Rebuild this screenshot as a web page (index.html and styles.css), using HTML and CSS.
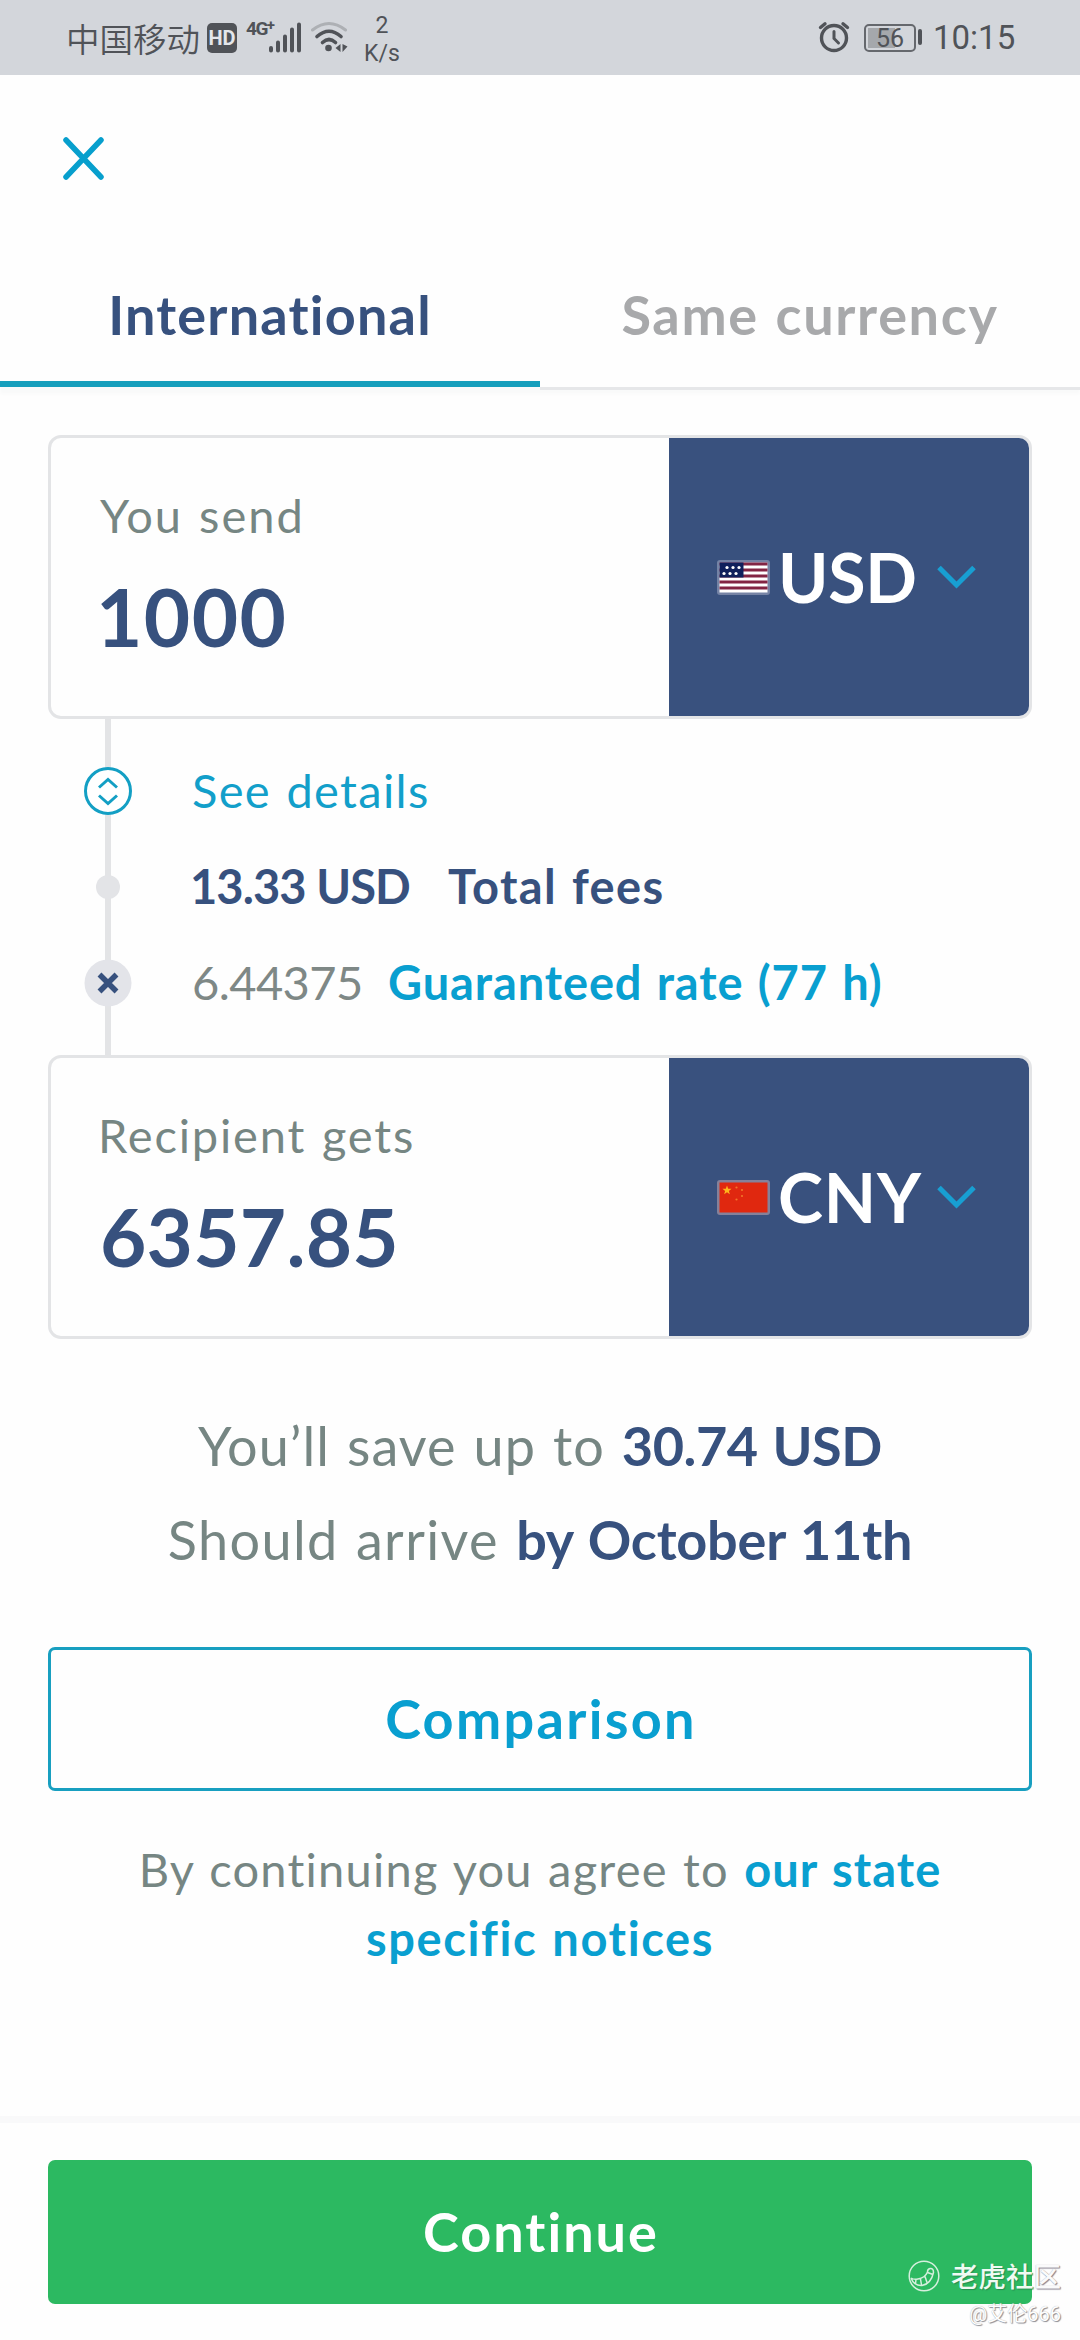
FILE: index.html
```
<!DOCTYPE html>
<html lang="en">
<head>
<meta charset="utf-8">
<title>Send money</title>
<link rel="stylesheet" href="styles.css">
</head>
<body>
<header class="status">
  <span class="carrier">中国移动</span>
  <span class="hd">HD</span>
  <span class="net">4G<sup>+</sup></span>
  <svg class="signal" width="34" height="32" viewBox="0 0 34 32"><path d="M3 27v2.500M10 21.500v8M17 15.500v14M24 8.500v21M31 3.500v26" stroke="#505358" stroke-width="4" stroke-linecap="round"/></svg>
  <svg class="wifi" width="38" height="34" viewBox="0 0 38 34" fill="none" stroke-linecap="round"><path d="M2.500 10Q19-3 35.500 10" stroke="#adb0b4" stroke-width="3"/><path d="M7 16.500Q19 6 31 16.500M12.500 22.500Q19 16.500 25.500 22.500" stroke="#505358" stroke-width="3.600"/><circle cx="18.500" cy="28" r="3.300" fill="#505358"/><path d="M30.500 24v8l-5-4zM32.500 24v8l5-5.500z" fill="#505358"/></svg>
  <span class="speed"><span>2</span><span>K/s</span></span>
  <span class="spacer"></span>
  <svg class="alarm" width="32" height="32" viewBox="0 0 32 32" fill="none" stroke="#505358" stroke-linecap="round"><circle cx="16" cy="17" r="12.500" stroke-width="3.400"/><path d="M16 10.500V17.500L20.500 22" stroke-width="3"/><path d="M2.500 6.500L7 2.800M29.500 6.500L25 2.800" stroke-width="3.400"/></svg>
  <span class="battery">56</span>
  <span class="battery-tip"></span>
  <span class="clock">10:15</span>
</header>

<div class="topbar">
  <svg width="42" height="43" viewBox="0 0 42 43"><path d="M3 3L38 40M38 3L3 40" stroke="#079fcd" stroke-width="5.500" stroke-linecap="round"/></svg>
</div>

<nav class="tabs">
  <div class="tab tab-active"><span class="tab-intl">International</span></div>
  <div class="tab"><span class="tab-same">Same currency</span></div>
</nav>

<main>
  <section class="card">
    <div class="entry">
      <div class="label">You send</div>
      <div class="amount amount-send">1000</div>
    </div>
    <div class="currency">
      <svg class="flag" width="53" height="35" viewBox="0 0 53 35"><rect width="53" height="35" rx="3" fill="#7583a5"/><path fill="#fff" d="M2.500 2.500h48v30h-48z"/><path d="M2.500 4h48M2.500 10h48M2.500 16h48M2.500 22h48M2.500 28h48" stroke="#832544" stroke-width="3"/><path fill="#10205c" d="M2.500 2.500h24v15h-24z"/><g fill="#fff"><circle cx="10" cy="7.500" r="1.600"/><circle cx="16" cy="7.500" r="1.600"/><circle cx="22" cy="7.500" r="1.600"/><circle cx="7" cy="13.500" r="1.600"/><circle cx="13" cy="13.500" r="1.600"/><circle cx="19" cy="13.500" r="1.600"/></g></svg>
      <span class="code code-usd">USD</span>
      <svg class="chevron" width="39" height="24" viewBox="0 0 39 24"><path d="M2 2.500L19.500 20L37 2.500" fill="none" stroke="#189fd2" stroke-width="5"/></svg>
    </div>
  </section>

  <section class="details">
    <div class="step">
      <svg class="node" width="48" height="48" viewBox="0 0 48 48" fill="none" stroke="#139fc4"><circle cx="24" cy="24" r="22.500" fill="#fff" stroke-width="3"/><path d="M15 20.500L24 12.500L33 20.500M15 28.500L24 36.500L33 28.500" stroke-width="3"/></svg>
      <span class="details-link">See details</span>
    </div>
    <div class="step">
      <svg class="node" width="48" height="48" viewBox="0 0 48 48"><circle cx="24" cy="24" r="12" fill="#e3e4e7"/></svg>
      <span class="fee">13.33 USD</span><span class="fee-label">Total fees</span>
    </div>
    <div class="step">
      <svg class="node" width="48" height="48" viewBox="0 0 48 48"><circle cx="24" cy="24" r="23.500" fill="#e3e4e9"/><path d="M15.500 15.500L32.500 32.500M32.500 15.500L15.500 32.500" stroke="#37517e" stroke-width="5.500"/></svg>
      <span class="rate">6.44375</span><span class="rate-label">Guaranteed rate (77 h)</span>
    </div>
  </section>

  <section class="card">
    <div class="entry">
      <div class="label label-get">Recipient gets</div>
      <div class="amount amount-get">6357.85</div>
    </div>
    <div class="currency">
      <svg class="flag" width="53" height="35" viewBox="0 0 53 35"><rect width="53" height="35" rx="3" fill="#85819a"/><path fill="#e0280f" d="M2.500 2.500h48v30h-48z"/><path fill="#ffb51c" d="M10 5.500l1.200 3.200 3.300.1-2.600 2.100.9 3.300-2.800-1.900-2.800 1.900.9-3.300-2.600-2.100 3.300-.1z"/><g fill="#f2752a"><circle cx="19.500" cy="7.500" r="1.100"/><circle cx="25" cy="10" r="1.100"/><circle cx="25" cy="16" r="1.100"/><circle cx="19.500" cy="19.500" r="1.100"/></g></svg>
      <span class="code code-cny">CNY</span>
      <svg class="chevron" width="39" height="24" viewBox="0 0 39 24"><path d="M2 2.500L19.500 20L37 2.500" fill="none" stroke="#189fd2" stroke-width="5"/></svg>
    </div>
  </section>

  <section class="summary">
    <p class="saving">You’ll save up to <strong class="saving-sum">30.74 USD</strong></p>
    <p class="arrival">Should arrive <strong>by October 11th</strong></p>
  </section>

  <div class="button button-outline"><span>Comparison</span></div>
  <p class="notice">By continuing you agree to <strong>our state <span class="notice-end">specific notices</span></strong></p>
</main>

<footer>
  <div class="button button-primary"><span>Continue</span></div>
</footer>

<div class="watermark">
  <div class="brand">
    <svg width="32" height="32" viewBox="0 0 32 32" fill="none" stroke="#d5efdd" stroke-width="1.500"><circle cx="16" cy="16" r="14.800"/><path d="M3 18Q6 26 14 25.500Q23 24 25.500 12.500Q25.500 8 22 8.500Q19.500 9 19.500 12Q17 18 10 19Q6 20 3 18M8 19.500L7.500 23.500M12.500 19L13.500 25M17 16.500L19 22.500M19.500 12.500L25 14.500"/></svg>
    <span class="brand-name">老虎社<span class="brand-tail">区</span></span>
  </div>
  <div class="author">@艾伦666</div>
</div>
</body>
</html>
```
FILE: styles.css
```
* { box-sizing: border-box; }
html, body { margin: 0; }
body {
  position: relative;
  width: 1080px;
  height: 2340px;
  overflow: hidden;
  display: flex;
  flex-direction: column;
  background: #fefefe;
  color: #37517e;
  font-family: "Lato", "Noto Sans CJK SC", sans-serif;
}
p { margin: 0; }
svg { display: block; flex: none; }

/* status bar */
.status {
  flex: none;
  display: flex;
  align-items: flex-start;
  height: 75px;
  padding-left: 66px;
  background: #d3d6db;
  color: #505358;
  font-family: "Roboto", "Noto Sans CJK SC", sans-serif;
}
.carrier { width: 141px; margin-top: 14px; font: 350 33.500px/48px "Noto Sans CJK SC", sans-serif; white-space: nowrap; }
.hd {
  width: 30px; height: 30px; margin-top: 23px;
  border-radius: 5px;
  background: #505358;
  color: #e4e6ea;
  font-size: 20px; font-weight: 700; line-height: 30px;
  text-align: center;
}
.net { width: 31px; margin: 19px 0 0 9px; font-size: 19px; font-weight: 700; line-height: 20px; letter-spacing: -1.500px; white-space: nowrap; }
.net sup { font-size: 15px; line-height: 0; vertical-align: 5px; }
.signal { margin: 21px 0 0 -9px; }
.wifi { margin: 20px 0 0 8px; }
.speed { display: flex; flex-direction: column; width: 40px; margin: 12px 0 0 14px; font-size: 23px; line-height: 28px; text-align: center; }
.spacer { flex: 1; }
.alarm { margin: 21px 14px 0 0; }
.battery {
  width: 52px; height: 28px; margin-top: 24px;
  border: 2px solid #65686d;
  border-radius: 5px;
  background: linear-gradient(90deg, #a5a8ac 27px, transparent 27px) 2px 2px / 44px 20px no-repeat;
  font-size: 25px; line-height: 25px;
  text-align: center;
}
.battery-tip { width: 4px; height: 16px; margin: 29px 11px 0 2px; border-radius: 2px; background: #505358; }
.clock { width: 147px; margin-top: 18px; font-size: 33px; line-height: 40px; }

/* header */
.topbar { flex: none; height: 169px; padding: 62px 0 0 63px; }
.tabs { flex: none; display: flex; height: 143px; box-shadow: 0 7px 3px #f9fafa; }
.tab {
  flex: 1;
  padding-top: 38px;
  box-shadow: 0 3px 0 #e6e7e9;
  color: #a8a9ab;
  font-size: 54px; font-weight: 700; line-height: 65px;
  text-align: center;
}
.tab-active { border-bottom: 6px solid #169fbd; box-shadow: none; color: #37517e; }
.tab-intl { letter-spacing: 1.200px; }
.tab-same { letter-spacing: 1.650px; word-spacing: 2px; }

main { flex: 1; padding: 48px 48px 0; }

/* amount cards */
.card {
  display: flex;
  width: 984px; height: 284px;
  border: 3px solid #e3e4e6;
  border-radius: 13px;
  background: #fefefe;
}
.entry { width: 618px; padding: 49px 0 0 49px; }
.label { color: #768683; font-size: 47px; line-height: 56px; letter-spacing: 2px; word-spacing: 2px; }
.label-get { margin-left: -2px; letter-spacing: 1.830px; }
.amount { margin-top: 25px; font-size: 80px; font-weight: 700; line-height: 96px; }
.amount-send { margin-left: -4px; letter-spacing: 1.430px; }
.amount-get { letter-spacing: .220px; }
.currency {
  flex: 1;
  display: flex;
  align-items: center;
  padding-left: 48px;
  border-radius: 0 10px 10px 0;
  background: #39517e;
}
.code { width: 159px; margin: 0 0 1px 8px; color: #fff; font-size: 68px; font-weight: 700; line-height: 82px; white-space: nowrap; }
.code-usd { letter-spacing: -.240px; }
.code-cny { letter-spacing: .810px; }

/* fee breakdown */
.details {
  height: 336px;
  padding: 24px 0 24px 36px;
  background: linear-gradient(#e3e4e6, #e3e4e6) 57px 0 / 6px 100% no-repeat;
}
.step { display: flex; align-items: center; height: 96px; font-size: 47px; line-height: 56px; white-space: nowrap; }
.step span { margin-bottom: 2px; }
.node { margin-right: 60px; }
.details-link { color: #129fca; letter-spacing: 1.340px; word-spacing: 2px; }
.fee { width: 258px; margin-left: -2px; font-weight: 700; letter-spacing: -.910px; }
.fee-label { font-weight: 700; letter-spacing: 1.410px; word-spacing: 2px; }
.rate { width: 196px; color: #7e8886; letter-spacing: -.570px; }
.rate-label { color: #099fd0; font-weight: 700; letter-spacing: .890px; word-spacing: 2px; }

/* summary and actions */
.summary { padding: 60px 0 60px; color: #768683; font-size: 54px; line-height: 94px; text-align: center; white-space: nowrap; word-spacing: 2px; }
.summary strong { color: #37517e; font-weight: 700; letter-spacing: -.200px; }
.summary .saving-sum { letter-spacing: -.440px; }
.saving { letter-spacing: 1.080px; }
.arrival { letter-spacing: 1.390px; }
.button {
  display: flex;
  align-items: center;
  justify-content: center;
  height: 144px;
  border-radius: 7px;
  font-size: 54px; font-weight: 700; line-height: 65px;
}
.button-outline { border: 3px solid #189fc0; color: #099fd0; letter-spacing: 2.320px; }
.button-outline span { margin: 0 0 1px 2px; }
.notice { width: 860px; margin: 44px auto 0; color: #768683; font-size: 47px; line-height: 69px; text-align: center; letter-spacing: 1.230px; word-spacing: 2px; }
.notice strong { color: #099fd0; font-weight: 700; letter-spacing: 1.070px; }
.notice-end { letter-spacing: 1.610px; white-space: nowrap; }
footer { flex: none; height: 224px; padding: 37px 48px 0; border-top: 7px solid #f9f9fa; }
.button-primary { background: #2cb961; color: #fff; letter-spacing: 2.010px; }
.button-primary span { margin: 0 0 1px 2px; }

/* community watermark over the page */
.watermark { position: absolute; right: 19px; bottom: 12px; display: flex; flex-direction: column; align-items: flex-end; font-family: "Noto Sans CJK SC", sans-serif; }
.brand { display: flex; align-items: center; gap: 11px; height: 40px; }
.brand-name { margin-bottom: 6px; color: #effaf2; font-size: 27.500px; font-weight: 500; line-height: 40px; text-shadow: 1px 1px 1px #278d50; }
.brand-tail { color: #fafafb; text-shadow: 1px 1px 1px #88838f, 0 0 1px #aaa6b0; }
.brand svg { margin-bottom: 4px; }
.author { margin-top: 2px; color: #fefefe; font-family: "Roboto", "Noto Sans CJK SC", sans-serif; font-size: 20px; line-height: 28px; text-shadow: 1px 1px 1px #8a8a90, 0 0 1px #b0b0b5; }
```
